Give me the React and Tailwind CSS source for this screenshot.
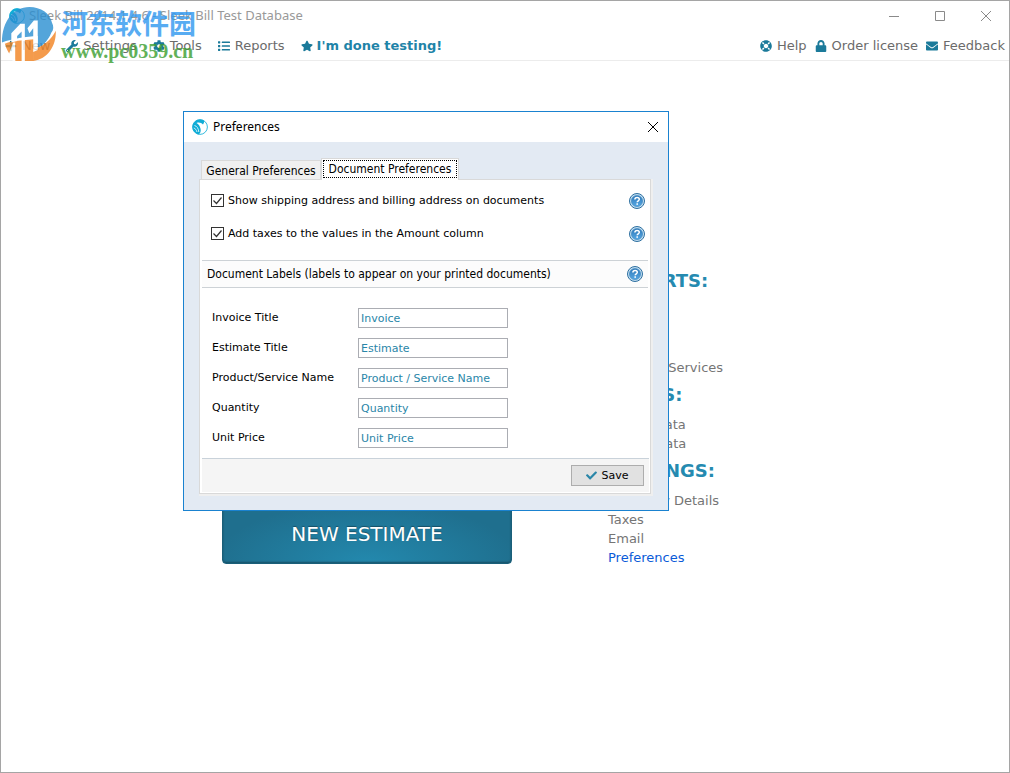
import { useState } from 'react'
import { FaPlus, FaWrench, FaCog, FaList, FaStar, FaLifeRing, FaLock, FaEnvelope, FaCheck } from 'react-icons/fa'

const toolbarLeft = [
  { label: 'New', icon: FaPlus },
  { label: 'Settings', icon: FaWrench },
  { label: 'Tools', icon: FaCog },
  { label: 'Reports', icon: FaList },
]

const toolbarRight = [
  { label: 'Help', icon: FaLifeRing },
  { label: 'Order license', icon: FaLock },
  { label: 'Feedback', icon: FaEnvelope },
]

const documentLabels = [
  { id: 'invoice-title', label: 'Invoice Title', value: 'Invoice' },
  { id: 'estimate-title', label: 'Estimate Title', value: 'Estimate' },
  { id: 'product-name', label: 'Product/Service Name', value: 'Product / Service Name' },
  { id: 'quantity', label: 'Quantity', value: 'Quantity' },
  { id: 'unit-price', label: 'Unit Price', value: 'Unit Price' },
]

function AppLogo() {
  return (
    <svg viewBox="0 0 16 16" className="size-4 shrink-0" aria-hidden="true">
      <circle cx="8" cy="8" r="7.400" fill="#fff" stroke="#1fb3d9" strokeWidth=".9" />
      <path d="M8 .5C4 .5.500 4 .500 8c0 3.500 2.500 6.500 6 7.400C8.500 14.500 9 12.500 8.600 10 8 7 6.500 5 4.500 4 7 3 9.500 3.800 11 5.500 12.500 3.500 12.500 2 11.500 1.300 10.500.8 9 .5 8 .5z" fill="#10acd6" />
      <path d="M2.500 6.500c2.500.6 4 3 4.300 6.500M1.800 9c1.600.6 2.700 2 3.200 4" fill="none" stroke="#fff" strokeWidth=".8" />
    </svg>
  )
}

function HelpButton({ label }) {
  return (
    <button type="button" aria-label={label} className="size-4 shrink-0">
      <svg viewBox="0 0 16 16" className="size-4">
        <defs>
          <linearGradient id="helpFill" x1="0" y1="0" x2="0" y2="1">
            <stop offset="0" stopColor="#2f78b8" />
            <stop offset="1" stopColor="#56a8e4" />
          </linearGradient>
        </defs>
        <circle cx="8" cy="8" r="7.500" fill="#c4dff2" stroke="#2d6f9f" />
        <circle cx="8" cy="8" r="5.600" fill="url(#helpFill)" stroke="#3c86bd" strokeWidth=".6" />
        <path d="M5.900 6.500c0-1.300.9-2.100 2.200-2.100s2.200.8 2.200 1.900c0 1.500-2.100 1.500-2.100 3" fill="none" stroke="#fff" strokeWidth="1.500" />
        <rect x="7.400" y="10.300" width="1.600" height="1.500" fill="#fff" />
      </svg>
    </button>
  )
}

function ToolbarItem({ label, icon: Icon }) {
  return (
    <button type="button" className="flex items-center gap-[5px] text-[13px] text-[#6b6b6b]">
      <Icon size={12} className="text-[#1b7a9a]" />
      {label}
    </button>
  )
}

function Watermark() {
  return (
    <div className="pointer-events-none absolute left-0 top-1 flex items-start gap-0.5 opacity-80">
      <svg viewBox="0 0 180 180" className="size-[58px]" aria-hidden="true">
        <path
          d="M3 116C3 50 38 6 88 6c36 0 64 20 70 48 6 12 6 22-2 32-8 20-22 38-42 48V96C76 98 36 104 3 116z"
          fill="#2a8fd2"
        />
        <path d="M170 80c2 48-26 88-70 94v-36c32-10 56-30 70-58z" fill="#f28320" />
        <path d="M12 120c10-4 20-6 32-8v58c-14-10-26-28-32-50zM44 112l58-6v68H44z" fill="#f28320" />
        <path d="M32 88l28-30h14v120H64V82L50 96v16l-18 4z" fill="#fff" />
        <path d="M82 72l20-24h12v92l-14 6V72L88 88z" fill="#fff" />
        <path d="M38 116h6v60h-6l-14-22z" fill="#fff" />
      </svg>
      <div className="flex flex-col pt-0.5">
        <span className="font-['Noto_Sans_CJK_SC',sans-serif] text-[27px] leading-8 font-bold text-[#2f98f0]">河东软件园</span>
        <span className="pt-0.5 font-['Liberation_Serif',serif] text-[20px] leading-5 font-bold text-[#3a9e30]">www.pc0359.cn</span>
      </div>
    </div>
  )
}

function TitleBar() {
  return (
    <div className="flex h-[30px] items-center justify-between pl-2">
      <div className="flex items-center gap-1 font-['Noto_Sans',sans-serif] text-[13px] text-[#999]">
        <AppLogo />
        Sleek Bill 2014.1.4.6 - Sleek Bill Test Database
      </div>
      <div className="flex items-center gap-[34px] pr-[17px] text-[#8a8a8a]">
        <button type="button" aria-label="Minimize">
          <svg viewBox="0 0 12 12" className="size-3"><path d="M1 6.500h10" stroke="currentColor" /></svg>
        </button>
        <button type="button" aria-label="Maximize">
          <svg viewBox="0 0 12 12" className="size-3"><path d="M1.500 1.500h9v9h-9z" fill="none" stroke="currentColor" /></svg>
        </button>
        <button type="button" aria-label="Close">
          <svg viewBox="0 0 12 12" className="size-3"><path d="M1 1l10 10M11 1L1 11" stroke="currentColor" /></svg>
        </button>
      </div>
    </div>
  )
}

function Toolbar() {
  return (
    <nav className="flex h-[30px] items-center justify-between border-b border-[#ececec] px-1">
      <div className="flex items-center gap-4">
        {toolbarLeft.map((item) => (
          <ToolbarItem key={item.label} {...item} />
        ))}
        <button type="button" className="flex items-center gap-1 text-[13px] font-bold text-[#1f84a8]">
          <FaStar size={12} className="text-[#1b7a9a]" />
          I'm done testing!
        </button>
      </div>
      <div className="flex items-center gap-2">
        {toolbarRight.map((item) => (
          <ToolbarItem key={item.label} {...item} />
        ))}
      </div>
    </nav>
  )
}

function LinkGroup({ title, links }) {
  return (
    <section>
      <h2 className="pb-0.5 text-lg leading-9 font-bold text-[#258ab0]">{title}</h2>
      <ul>
        {links.map((link) => (
          <li key={link} className="text-[13px] leading-[19px]">
            <a href="#" className={link === 'Preferences' ? 'text-[#0a5bd8]' : 'text-[#757575]'}>{link}</a>
          </li>
        ))}
      </ul>
    </section>
  )
}

function CheckRow({ id, label, help }) {
  const [checked, setChecked] = useState(true)
  return (
    <div className="flex h-[33px] items-center justify-between pr-[5px] pl-[11px]">
      <label htmlFor={id} className="flex items-center gap-1">
        <span className="grid">
          <input
            id={id}
            type="checkbox"
            checked={checked}
            onChange={(e) => setChecked(e.target.checked)}
            className="peer col-start-1 row-start-1 size-[13px] appearance-none border border-[#333] bg-white"
          />
          <svg viewBox="0 0 13 13" className="pointer-events-none invisible col-start-1 row-start-1 size-[13px] peer-checked:visible">
            <path d="M2.500 6.500l3 3 5-6" fill="none" stroke="#333" strokeWidth="1.200" />
          </svg>
        </span>
        {label}
      </label>
      <HelpButton label={help} />
    </div>
  )
}

function PreferencesDialog() {
  return (
    <div role="dialog" aria-labelledby="dialog-title" className="absolute left-[182px] top-[110px] w-[486px] border border-[#1a82d0] bg-[#e3eaf3] text-[11px] leading-4 text-black">
      <div className="flex h-[30px] items-center justify-between bg-white pr-[9px] pl-2">
        <div className="flex items-center gap-[5px]">
          <AppLogo />
          <h1 id="dialog-title" className="font-['Noto_Sans',sans-serif] text-xs">Preferences</h1>
        </div>
        <button type="button" aria-label="Close preferences">
          <svg viewBox="0 0 12 12" className="size-3"><path d="M1 1l10 10M11 1L1 11" stroke="currentColor" /></svg>
        </button>
      </div>

      <div className="pt-4 pr-[17px] pb-4 pl-[15px]">
        <div role="tablist" className="flex items-end pl-0.5 font-['DejaVu_Sans_Condensed',sans-serif] text-xs">
          <button type="button" role="tab" aria-selected="false" className="h-[19px] w-[120px] border border-b-0 border-[#d9d9d9] bg-[#f0f0f0] pt-px leading-[18px] whitespace-nowrap">
            General Preferences
          </button>
          <button type="button" role="tab" aria-selected="true" className="z-10 -mb-px h-[22px] w-[138px] border border-b-0 border-[#d9d9d9] bg-white p-px pb-0.5 whitespace-nowrap">
            <span className="block h-[18px] border border-dotted border-black leading-4">Document Preferences</span>
          </button>
        </div>

        <div role="tabpanel" className="border border-[#d9d9d9] bg-white shadow-[1px_1px_0_1px_#efefef]">
          <div className="pt-1 pb-2.5">
            <CheckRow id="show-address" label="Show shipping address and billing address on documents" help="Help about addresses" />
            <CheckRow id="add-taxes" label="Add taxes to the values in the Amount column" help="Help about taxes" />
          </div>

          <div className="mx-0.5 flex h-7 items-center justify-between border-y border-[#cdd2d6] bg-[#fcfcfc] px-[5px]">
            <h2 className="font-['DejaVu_Sans_Condensed',sans-serif] text-xs">Document Labels (labels to appear on your printed documents)</h2>
            <HelpButton label="Help about document labels" />
          </div>

          <div className="flex flex-col gap-2.5 pt-5 pb-2.5 pl-3">
            {documentLabels.map((field) => (
              <div key={field.id} className="flex h-5 items-center">
                <label htmlFor={field.id} className="w-[146px] leading-[18px]">{field.label}</label>
                <input
                  id={field.id}
                  type="text"
                  defaultValue={field.value}
                  className="h-5 w-[150px] border border-[#abadb3] bg-white px-0.5 text-[#2a86a8]"
                />
              </div>
            ))}
          </div>

          <div className="mr-px mb-px ml-0.5 flex h-[34px] items-center justify-end border-t border-[#c9d2da] bg-[#f5f5f5] pr-[5px]">
            <button type="button" className="flex h-[21px] w-[73px] items-center justify-center gap-1 border border-[#adadad] bg-[#e1e1e1]">
              <FaCheck size={11} className="text-[#2a86a8]" />
              Save
            </button>
          </div>
        </div>
      </div>
    </div>
  )
}

export default function App() {
  return (
    <div className="relative min-h-screen border border-[#a5a5a5] bg-white font-['DejaVu_Sans',sans-serif]">
      <TitleBar />
      <Toolbar />

      <main className="mx-auto flex w-[566px] max-w-full items-end justify-between pt-[202px]">
        <button
          type="button"
          className="mb-[3px] h-[60px] w-[290px] rounded-sm border border-[#1a5f79] bg-[radial-gradient(ellipse_at_50%_100%,#2389ae_0%,#1f6f8e_75%)] text-xl text-white shadow-[inset_0_-1px_2px_#174f65] text-shadow-[0_-1px_1px_#174f65]"
        >
          NEW ESTIMATE
        </button>
        <div className="w-[180px]">
          <LinkGroup title="REPORTS:" links={['Invoices', 'Clients', 'Taxes', 'Products Services']} />
          <LinkGroup title="TOOLS:" links={['Export Data', 'Import Data']} />
          <LinkGroup title="SETTINGS:" links={['Company Details', 'Taxes', 'Email', 'Preferences']} />
        </div>
      </main>

      <PreferencesDialog />
      <Watermark />
    </div>
  )
}
